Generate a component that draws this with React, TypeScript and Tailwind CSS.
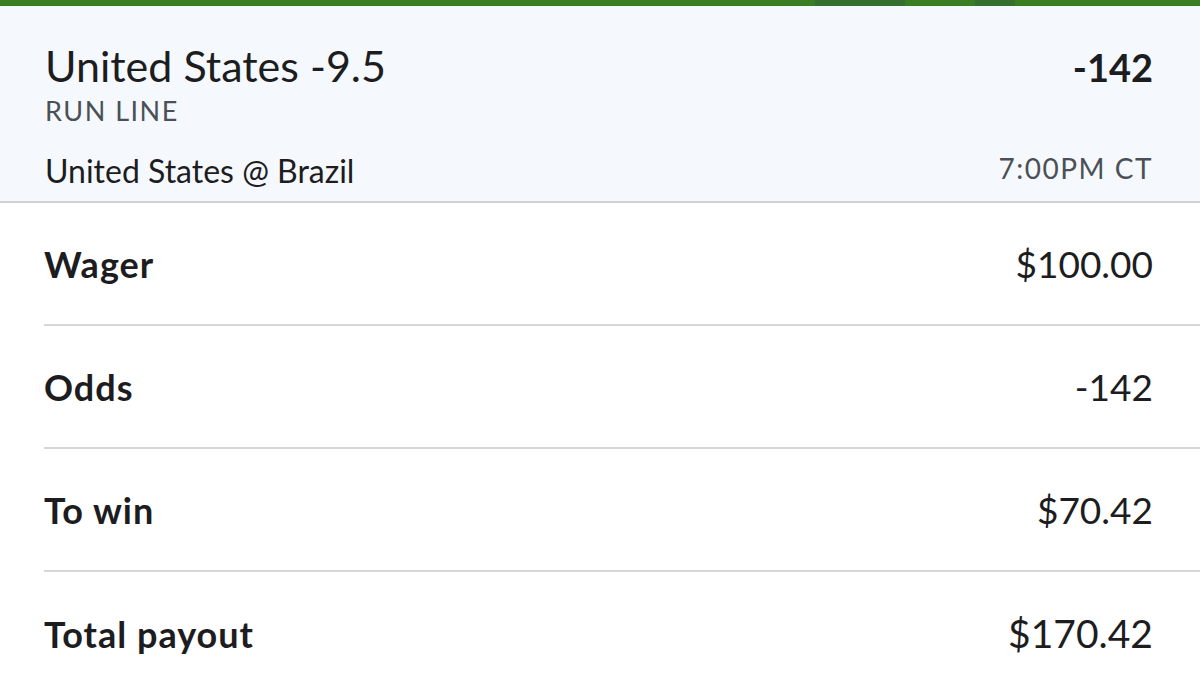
import React from "react";

const rows = [
  { label: "Wager", value: "$100.00", big: false },
  { label: "Odds", value: "-142", big: false },
  { label: "To win", value: "$70.42", big: false },
  { label: "Total payout", value: "$170.42", big: true },
];

export default function App() {
  return (
    <div className="w-[1200px] h-[699px] overflow-hidden bg-white text-[#1d1d1f]" style={{ fontFamily: "Lato, 'Open Sans', sans-serif" }}>
      <div className="h-[6px] bg-[#3a7d22] flex">
        <div className="w-[815px]" />
        <div className="w-[90px] bg-[#356f2e]" />
        <div className="w-[70px]" />
        <div className="w-[40px] bg-[#356f2e]" />
      </div>
      <div className="h-[197px] bg-[#f5f9fd] border-b-2 border-[#cfd0d2] pl-[45px] pr-[47px] pt-[36px]">
        <div className="flex justify-between items-baseline">
          <div className="text-[43px] leading-[48px]">United States -9.5</div>
          <div className="text-[38px] leading-[48px] font-bold">-142</div>
        </div>
        <div className="mt-[4px] text-[27px] leading-[32px] tracking-[1.5px] text-[#4b5056]">RUN LINE</div>
        <div className="flex justify-between items-end mt-[24px]">
          <div className="text-[32px] leading-[40px]">United States @ Brazil</div>
          <div className="text-[28px] leading-[32px] tracking-[1.5px] text-[#4b5056] pb-[7px]">7:00PM CT</div>
        </div>
      </div>
      <div className="pl-[44px]">
        {rows.map((r, i) => (
          <div key={r.label} className={`flex justify-between items-center h-[123px] pr-[47px] ${i < rows.length - 1 ? "border-b-2 border-[#d6d6d8]" : ""}`}>
            <div className="text-[36px] font-bold tracking-[1px]">{r.label}</div>
            <div className={r.big ? "text-[39px]" : "text-[37px]"}>{r.value}</div>
          </div>
        ))}
      </div>
    </div>
  );
}
